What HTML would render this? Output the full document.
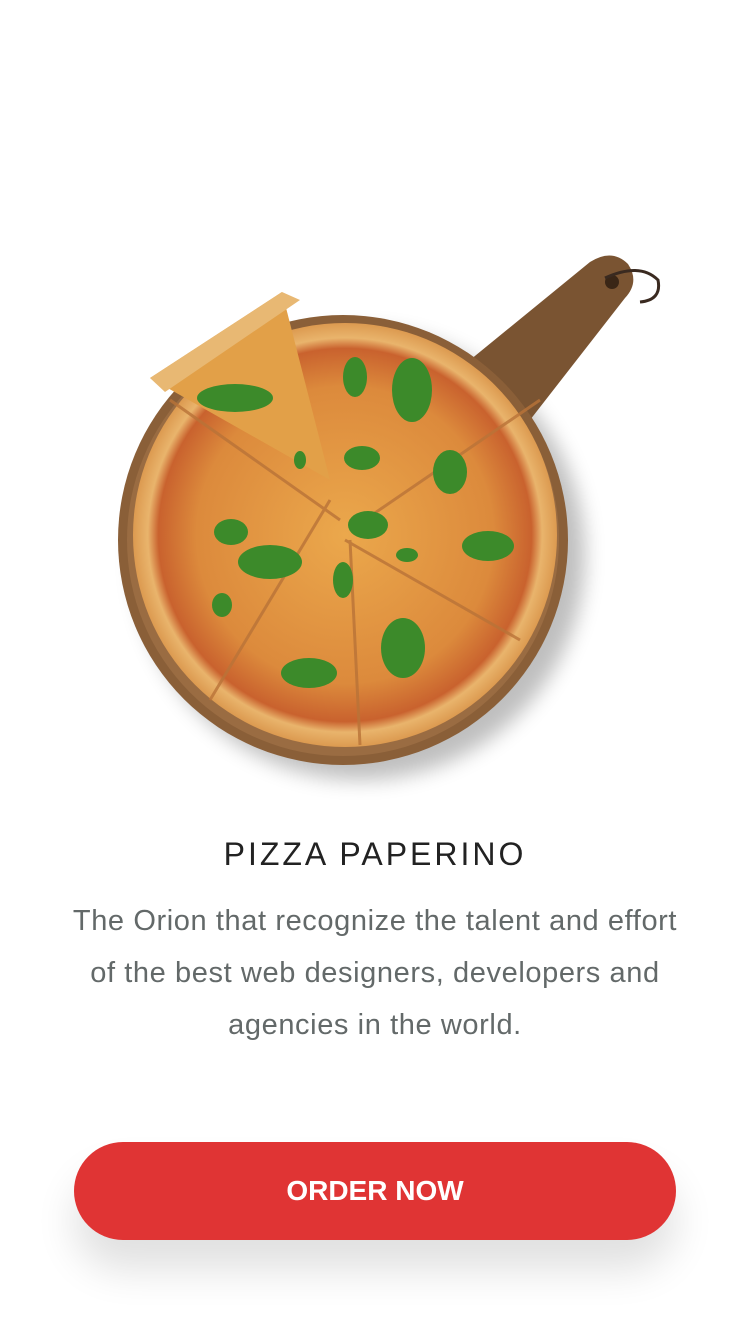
<!DOCTYPE html>
<html><head><meta charset="utf-8"><style>
body{margin:0;width:750px;height:1334px;background:#fff;font-family:"Liberation Sans",sans-serif;overflow:hidden;position:relative}
h1{position:absolute;top:832px;left:0;width:750px;text-align:center;margin:0;font-weight:normal;font-size:32px;letter-spacing:3px;color:#222;line-height:44px}
p{position:absolute;top:895px;left:40px;width:670px;text-align:center;margin:0;font-size:29px;line-height:52px;color:#636969;letter-spacing:0.6px}
.btn{position:absolute;left:74px;top:1142px;width:602px;height:98px;border-radius:49px;background:#e03434;color:#fff;font-weight:bold;font-size:28px;text-align:center;line-height:98px;box-shadow:0 30px 40px rgba(0,0,0,0.12)}
</style></head><body>
<svg width="750" height="800" style="position:absolute;left:0;top:0">
<defs>
<radialGradient id="pz" cx="50%" cy="50%" r="50%">
<stop offset="0" stop-color="#eba84c"/><stop offset="0.7" stop-color="#dc8a3c"/><stop offset="0.88" stop-color="#c9622e"/><stop offset="0.93" stop-color="#e9b46c"/><stop offset="1" stop-color="#dc9a50"/>
</radialGradient>
<filter id="sh"><feGaussianBlur stdDeviation="10"/></filter>
</defs>
<ellipse cx="360" cy="555" rx="225" ry="225" fill="#000" opacity="0.25" filter="url(#sh)"/>
<path d="M470 360 L590 262 Q612 248 628 264 Q640 282 625 298 L530 420 Z" fill="#7a5432"/>
<circle cx="612" cy="282" r="7" fill="#3a2616"/>
<path d="M605 278 Q640 262 658 280 Q662 300 640 302" fill="none" stroke="#3a2a20" stroke-width="3"/>
<circle cx="343" cy="540" r="225" fill="#8a5f38"/>
<circle cx="343" cy="540" r="216" fill="#9a6c42"/>
<circle cx="345" cy="535" r="212" fill="url(#pz)"/>
<path d="M150 378 L282 292 L330 480 Z" fill="#e2a048"/>
<path d="M150 378 L282 292 L300 300 L165 392 Z" fill="#e8b873"/>
<g stroke="#b97338" stroke-width="3" fill="none" opacity="0.8">
<path d="M330 500 L210 700"/><path d="M345 540 L520 640"/><path d="M350 540 L360 745"/><path d="M340 520 L170 400"/><path d="M350 530 L540 400"/>
</g>
<g fill="#3c8a2a">
<ellipse cx="235" cy="398" rx="38" ry="14"/><ellipse cx="412" cy="390" rx="20" ry="32"/><ellipse cx="355" cy="377" rx="12" ry="20"/>
<ellipse cx="450" cy="472" rx="17" ry="22"/><ellipse cx="362" cy="458" rx="18" ry="12"/><ellipse cx="368" cy="525" rx="20" ry="14"/>
<ellipse cx="488" cy="546" rx="26" ry="15"/><ellipse cx="270" cy="562" rx="32" ry="17"/><ellipse cx="231" cy="532" rx="17" ry="13"/>
<ellipse cx="403" cy="648" rx="22" ry="30"/><ellipse cx="309" cy="673" rx="28" ry="15"/><ellipse cx="343" cy="580" rx="10" ry="18"/>
<ellipse cx="222" cy="605" rx="10" ry="12"/><ellipse cx="407" cy="555" rx="11" ry="7"/><ellipse cx="300" cy="460" rx="6" ry="9"/>
</g>
</svg>
<h1>PIZZA PAPERINO</h1>
<p>The Orion that recognize the talent and effort<br>of the best web designers, developers and<br>agencies in the world.</p>
<div class="btn">ORDER NOW</div>
</body></html>
